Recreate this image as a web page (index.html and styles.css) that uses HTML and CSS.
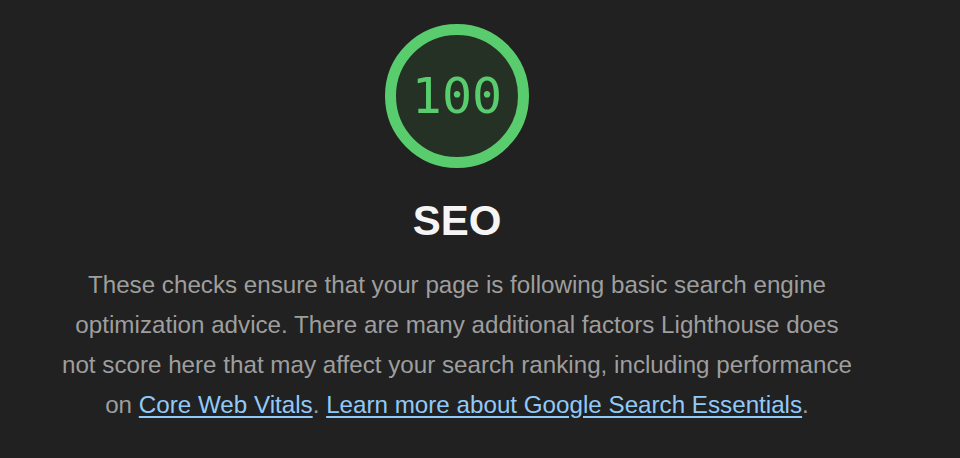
FILE: index.html
```html
<!DOCTYPE html>
<html lang="en">
<head>
<meta charset="utf-8">
<title>SEO</title>
<link rel="stylesheet" href="styles.css">
</head>
<body>
<div class="header">
  <div class="gauge">
    <svg class="gauge-svg" viewBox="0 0 144 144" width="144" height="144">
      <circle cx="72" cy="72" r="66.5" class="gauge-base"/>
      <circle cx="72" cy="72" r="66.5" class="gauge-arc"/>
    </svg>
    <span class="gauge-value">100</span>
  </div>
  <h1 class="title">SEO</h1>
  <p class="desc">These checks ensure that your page is following basic search engine optimization advice. There are many additional factors Lighthouse does not score here that may affect your search ranking, including performance on <a href="#">Core Web Vitals</a>. <a href="#">Learn more about Google Search Essentials</a>.</p>
</div>
</body>
</html>
```
FILE: styles.css
```css
html, body {
  margin: 0;
  padding: 0;
  background: #212121;
  height: 100%;
}
body {
  font-family: "Liberation Sans", Arial, Helvetica, sans-serif;
}
.header {
  width: 900px;
  margin-left: 7px;
  display: flex;
  flex-direction: column;
  align-items: center;
  padding-top: 24px;
}
.gauge {
  position: relative;
  width: 144px;
  height: 144px;
}
.gauge-svg {
  display: block;
}
.gauge-base {
  fill: #263126;
  stroke: none;
}
.gauge-arc {
  fill: none;
  stroke: #59cc6e;
  stroke-width: 11px;
}
.gauge-value {
  position: absolute;
  left: 0;
  right: 0;
  top: 0;
  bottom: 0;
  display: flex;
  align-items: center;
  justify-content: center;
  font-family: "DejaVu Sans Mono", "Liberation Mono", monospace;
  font-size: 50px;
  color: #59cc6e;
}
.title {
  margin: 29px 0 0;
  font-size: 42px;
  line-height: 48px;
  font-weight: bold;
  color: #f5f5f5;
}
.desc {
  margin: 20px 0 0;
  width: 801px;
  text-align: center;
  font-size: 24.2px;
  line-height: 40px;
  color: #9e9e9e;
}
.desc a {
  color: #90caf9;
  text-decoration: underline;
  text-underline-offset: 3px;
}
```
